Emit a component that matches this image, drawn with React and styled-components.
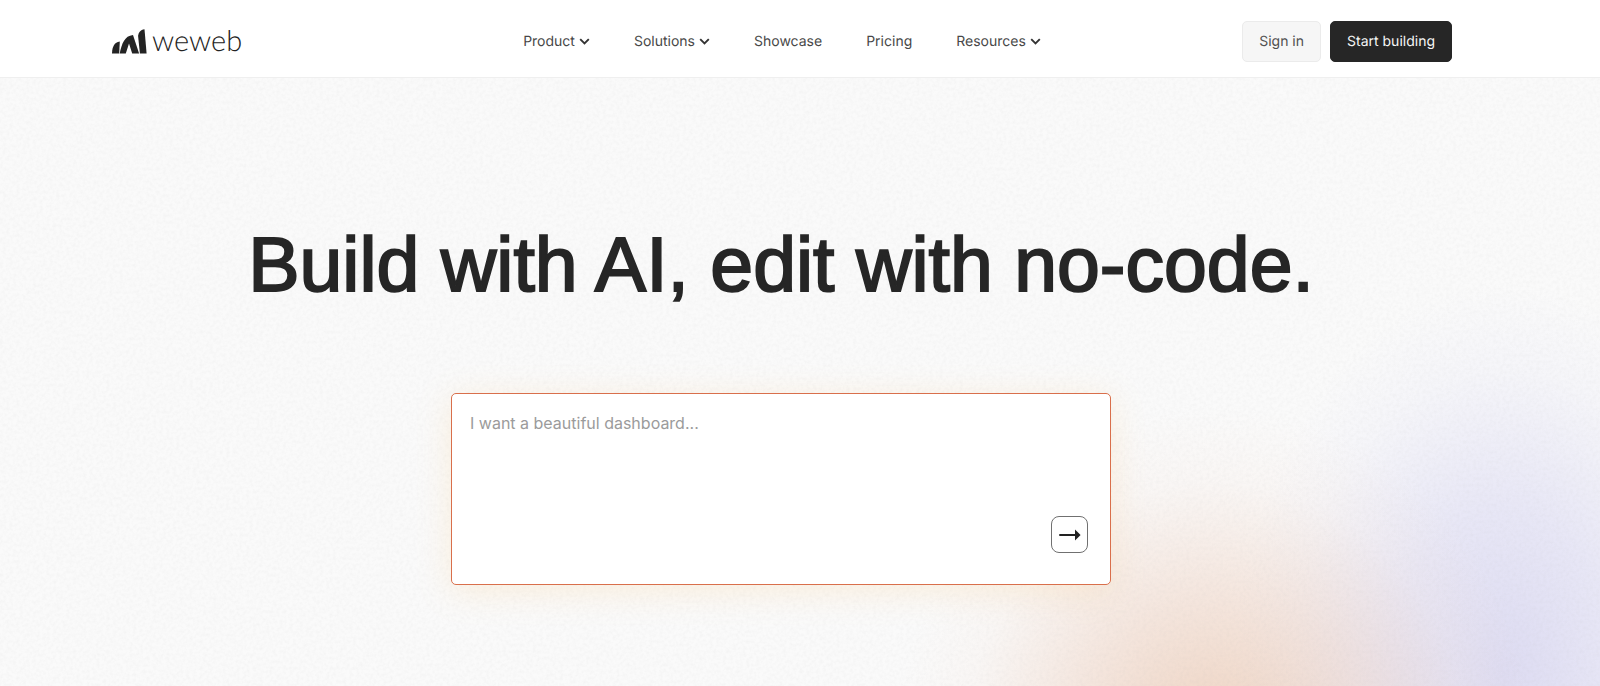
import React, { useState } from "react";
import styled, { createGlobalStyle } from "styled-components";

const GlobalStyle = createGlobalStyle`
  * {
    box-sizing: border-box;
  }
  body {
    margin: 0;
    background-color: #fafafa;
    color: #262626;
    font-family: Inter, sans-serif;
    text-rendering: geometricPrecision;
  }
`;

const Page = styled.div`
  min-height: 100vh;
  display: flex;
  flex-direction: column;
`;

const Header = styled.header`
  display: grid;
  grid-template-columns: 1fr auto 1fr;
  align-items: center;
  padding: 21px 148px 15px 112px;
  background-color: white;
  border-bottom: 1px solid #efefef;
  @media (max-width: 1100px) {
    padding: 21px 24px 15px;
  }
`;

const Logo = styled.a`
  display: flex;
  align-items: center;
  gap: 5px;
  justify-self: start;
  color: #232323;
  text-decoration: none;
`;

const LogoName = styled.span`
  padding-bottom: 2px;
  font-family: Lato, sans-serif;
  font-size: 29px;
  font-weight: 300;
  line-height: 32px;
`;

const Nav = styled.nav`
  display: flex;
  gap: 44px;
`;

const NavLink = styled.a`
  display: flex;
  align-items: center;
  gap: 4px;
  color: #484848;
  font-size: 14px;
  line-height: 20px;
  text-decoration: none;
`;

const Actions = styled.div`
  display: flex;
  justify-content: flex-end;
  gap: 9px;
`;

const Button = styled.button`
  height: 41px;
  padding: 0 16px;
  border: 1px solid ${(props) => (props.$dark ? "#262626" : "#ebebeb")};
  border-radius: 5px;
  background-color: ${(props) => (props.$dark ? "#262626" : "#f6f6f6")};
  color: ${(props) => (props.$dark ? "#f6f6f6" : "#505050")};
  font-family: inherit;
  font-size: 14px;
  text-rendering: inherit;
  white-space: nowrap;
  cursor: pointer;
`;

const Hero = styled.main`
  position: relative;
  flex: 1;
  display: flex;
  flex-direction: column;
  align-items: center;
  gap: 76px;
  padding: 135px 38px 100px 0;
  background:
    radial-gradient(
      ellipse 320px 340px at 76% 110%,
      rgba(230, 184, 154, 0.6),
      rgba(236, 200, 180, 0.4) 45%,
      rgba(244, 222, 210, 0.14) 78%,
      rgba(248, 240, 235, 0)
    ),
    radial-gradient(
      ellipse 270px 390px at 94% 98%,
      rgba(200, 197, 236, 0.58),
      rgba(206, 204, 240, 0.42) 42%,
      rgba(220, 220, 244, 0.16) 78%,
      rgba(240, 240, 250, 0)
    ),
    #fafafa;
`;

const Grain = styled.svg`
  position: absolute;
  inset: 0;
  width: 100%;
  height: 100%;
  pointer-events: none;
`;

const Title = styled.h1`
  position: relative;
  margin: 0;
  font-family: "Liberation Sans", Arial, sans-serif;
  font-size: 77px;
  font-weight: 400;
  line-height: 104px;
  text-align: center;
  -webkit-text-stroke: 2px #262626;
`;

const PromptForm = styled.form`
  position: relative;
  width: 44%;
  min-width: 320px;
  max-width: 660px;
  height: 192px;
  display: flex;
  align-items: flex-end;
  padding: 0 22px 31px 0;
  border: 1px solid #d96f4b;
  border-radius: 5px;
  background-color: white;
  box-shadow: 0 6px 34px rgba(255, 200, 120, 0.22);
`;

const PromptInput = styled.textarea`
  flex: 1;
  align-self: stretch;
  padding: 17px 18px;
  border: none;
  outline: none;
  resize: none;
  background: transparent;
  color: #262626;
  font-family: inherit;
  font-size: 16px;
  line-height: 24px;
  &::placeholder {
    color: #9b9b9b;
    opacity: 1;
  }
`;

const SendButton = styled.button`
  width: 37px;
  height: 37px;
  display: flex;
  align-items: center;
  justify-content: center;
  padding: 0;
  border: 1px solid #707070;
  border-radius: 8px;
  background-color: white;
  color: #222222;
  cursor: pointer;
`;

const links = [
  { label: "Product", menu: true },
  { label: "Solutions", menu: true },
  { label: "Showcase" },
  { label: "Pricing" },
  { label: "Resources", menu: true },
];

const LogoMark = () => (
  <svg width="35" height="25" viewBox="0 0 35 25" fill="#232323" aria-hidden="true">
    <path d="M0 24.5C.2 17.5 2.3 13.2 7.8 12.4L7.2 24.5Z" />
    <path d="M7.7 24.5C9.8 14.8 12.5 6.8 21 6L27.1 24.5H20.2L17 14.5L13.8 24.5Z" />
    <path d="M26.1 7C26.5 3.2 28.4.9 32.5.2L34.6 24.5H27.9Z" />
  </svg>
);

const Chevron = () => (
  <svg width="11" height="8" viewBox="0 0 11 8" fill="none" aria-hidden="true">
    <path d="M1.2 1.2L5.5 5.5L9.8 1.2" stroke="#333333" strokeWidth="1.9" />
  </svg>
);

const Arrow = () => (
  <svg width="22" height="12" viewBox="0 0 22 12" aria-hidden="true">
    <path d="M1 6H17" stroke="currentColor" strokeWidth="2" strokeLinecap="round" />
    <path d="M16 .5L21.6 6L16 11.5Z" fill="currentColor" />
  </svg>
);

const App = () => {
  const [prompt, setPrompt] = useState("");

  const handleSubmit = (event) => {
    event.preventDefault();
    setPrompt("");
  };

  return (
    <Page>
      <GlobalStyle />
      <Header>
        <Logo href="#">
          <LogoMark />
          <LogoName>weweb</LogoName>
        </Logo>
        <Nav>
          {links.map((link) => (
            <NavLink key={link.label} href="#">
              {link.label}
              {link.menu && <Chevron />}
            </NavLink>
          ))}
        </Nav>
        <Actions>
          <Button>Sign in</Button>
          <Button $dark>Start building</Button>
        </Actions>
      </Header>
      <Hero>
        <Grain aria-hidden="true">
          <filter id="grain">
            <feTurbulence type="fractalNoise" baseFrequency="0.3" numOctaves="3" stitchTiles="stitch" />
            <feColorMatrix values="0 0 0 0 0.4  0 0 0 0 0.4  0 0 0 0 0.4  0.14 0 0 0 -0.05" />
          </filter>
          <rect width="100%" height="100%" filter="url(#grain)" />
        </Grain>
        <Title>Build with AI, edit with no-code.</Title>
        <PromptForm onSubmit={handleSubmit}>
          <PromptInput
            aria-label="Describe your app"
            placeholder="I want a beautiful dashboard..."
            value={prompt}
            onChange={(event) => setPrompt(event.target.value)}
          />
          <SendButton type="submit" aria-label="Send">
            <Arrow />
          </SendButton>
        </PromptForm>
      </Hero>
    </Page>
  );
};

export default App;
